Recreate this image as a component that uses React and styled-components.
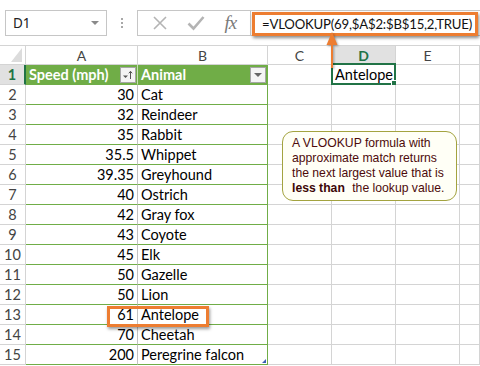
import React from "react";
import styled, { createGlobalStyle } from "styled-components";

const Global = createGlobalStyle`
  html, body { margin: 0; padding: 0; background: #fff; }
  body { width: 480px; height: 366px; overflow: hidden; }
`;

const CELL_FONT = `Lato, "Noto Sans", sans-serif`;
const UI_FONT = `"Noto Sans", "Open Sans", sans-serif`;
const GRID = "#d4d4d4";
const TGREEN = "#70ad47";
const XGREEN = "#217346";
const ORANGE = "#ed7d31";

const Page = styled.div`
  position: relative;
  width: 480px;
  height: 366px;
  overflow: hidden;
  background: #fff;
  font-family: ${CELL_FONT};
`;

const Toolbar = styled.div`
  display: flex;
  align-items: flex-start;
  height: 45px;
  padding: 10px 0 0 5px;
  box-sizing: border-box;
`;

const NameBox = styled.div`
  width: 102px;
  height: 26px;
  box-sizing: border-box;
  border: 1px solid #c6c6c6;
  display: flex;
  align-items: center;
  justify-content: space-between;
  padding: 0 7px 0 7px;
  font-family: ${UI_FONT};
  font-size: 13.5px;
  color: #222;
`;

const DropTri = styled.span`
  width: 0;
  height: 0;
  border-left: 4px solid transparent;
  border-right: 4px solid transparent;
  border-top: 4px solid ${(p) => p.$color || "#8a8a8a"};
`;

const Dots = styled.div`
  width: 30px;
  height: 26px;
  display: flex;
  flex-direction: column;
  align-items: center;
  justify-content: center;
  gap: 2px;
`;

const Dot = styled.span`
  width: 2px;
  height: 2px;
  background: #a8a8a8;
`;

const FormulaFrame = styled.div`
  flex: 1;
  height: 26px;
  box-sizing: border-box;
  border: 1px solid #c6c6c6;
  border-right: none;
  display: flex;
`;

const IconArea = styled.div`
  width: 112px;
  display: flex;
  align-items: center;
  justify-content: space-around;
  padding: 0 4px 0 4px;
  box-sizing: border-box;
`;

const Fx = styled.span`
  font-family: "Liberation Serif", "DejaVu Serif", serif;
  font-style: italic;
  font-size: 19px;
  color: #7a7a7a;
  letter-spacing: -1px;
`;

const FormulaArea = styled.div`
  flex: 1;
  border-left: 1px solid #c6c6c6;
  padding: 1px 0 0 1px;
`;

const Highlight = styled.div`
  width: 226px;
  height: 24px;
  box-sizing: border-box;
  border: 3px solid ${ORANGE};
  box-shadow: 1px 2px 3px rgba(0, 0, 0, 0.45);
  background: #fff;
  display: flex;
  align-items: center;
  padding-left: 7px;
  font-family: ${CELL_FONT};
  font-size: 13.2px;
  letter-spacing: -0.2px;
  color: #111;
  white-space: nowrap;
  overflow: hidden;
`;

const Sheet = styled.div`
  position: relative;
  display: grid;
  grid-template-columns: 26px 112px 130px 64px 64px 64px 20px;
  grid-auto-rows: 20px;
  grid-template-rows: 19px;
  border-top: 1px solid ${GRID};
`;

const Corner = styled.div`
  box-sizing: border-box;
  border-right: 1px solid ${GRID};
  border-bottom: 1px solid ${GRID};
  position: relative;
`;

const CornerTri = styled.span`
  position: absolute;
  right: 3px;
  bottom: 2px;
  width: 0;
  height: 0;
  border-left: 11px solid transparent;
  border-bottom: 14px solid #dcdcdc;
`;

const ColHead = styled.div`
  box-sizing: border-box;
  border-right: 1px solid ${GRID};
  border-bottom: 1px solid ${(p) => (p.$active ? XGREEN : GRID)};
  background: ${(p) => (p.$active ? "#e1e1e1" : "#fff")};
  color: ${(p) => (p.$active ? XGREEN : "#444")};
  font-weight: ${(p) => (p.$active ? 700 : 400)};
  font-size: 14px;
  display: flex;
  align-items: center;
  justify-content: center;
  padding-top: 1px;
`;

const RowHead = styled.div`
  box-sizing: border-box;
  border-right: ${(p) => (p.$active ? `2px solid ${XGREEN}` : `1px solid ${GRID}`)};
  border-bottom: 1px solid ${GRID};
  background: ${(p) => (p.$active ? "#e1e1e1" : "#fff")};
  color: ${(p) => (p.$active ? XGREEN : "#444")};
  font-weight: ${(p) => (p.$active ? 700 : 400)};
  font-size: 14.5px;
  display: flex;
  align-items: center;
  justify-content: center;
`;

const Cell = styled.div`
  position: relative;
  box-sizing: border-box;
  border-right: 1px solid ${(p) => p.$rightColor || GRID};
  border-bottom: 1px solid ${(p) => p.$bottomColor || GRID};
  background: ${(p) => (p.$header ? TGREEN : "#fff")};
  color: ${(p) => (p.$header ? "#fff" : "#000")};
  font-weight: ${(p) => (p.$header ? 700 : 400)};
  font-size: 14.5px;
  display: flex;
  align-items: center;
  justify-content: ${(p) => (p.$align === "right" ? "flex-end" : p.$header ? "space-between" : "flex-start")};
  padding: 0 3px 0 3px;
  white-space: nowrap;
  overflow: visible;
`;

const FilterBtn = styled.span`
  width: 16px;
  height: 16px;
  box-sizing: border-box;
  margin-right: -2px;
  border: 1px solid #a6a6a6;
  background: #f4f4f4;
  display: flex;
  align-items: center;
  justify-content: center;
  gap: 1px;
`;

const SelectBox = styled.span`
  position: absolute;
  left: -1px;
  top: -2px;
  width: 65px;
  height: 22px;
  box-sizing: border-box;
  border: 2px solid ${XGREEN};
  pointer-events: none;
`;

const FillHandle = styled.span`
  position: absolute;
  right: -4px;
  bottom: -4px;
  width: 5px;
  height: 5px;
  background: ${XGREEN};
  border: 1px solid #fff;
`;

const ResizeMark = styled.span`
  position: absolute;
  right: 1px;
  bottom: 1px;
  width: 0;
  height: 0;
  border-left: 4px solid transparent;
  border-bottom: 4px solid #3c5fb5;
`;

const RowMark = styled.span`
  position: absolute;
  left: 107px;
  top: 260px;
  width: 102px;
  height: 21px;
  box-sizing: border-box;
  border: 3px solid ${ORANGE};
  box-shadow: 1px 2px 3px rgba(0, 0, 0, 0.4);
  pointer-events: none;
`;

const Callout = styled.div`
  position: absolute;
  left: 282px;
  top: 85px;
  width: 175px;
  height: 70px;
  box-sizing: border-box;
  border: 1.5px solid #a3a33f;
  border-radius: 11px;
  background: #fffff6;
  padding: 4px 6px 0 9px;
  font-family: "Liberation Sans", Arial, sans-serif;
  font-size: 12.2px;
  line-height: 15px;
  color: #4d0b0b;
  white-space: nowrap;
`;

const Strong = styled.b`
  font-weight: 700;
  color: #3d0707;
  margin-right: 4px;
`;

const ArrowSvg = styled.svg`
  position: absolute;
  left: 325px;
  top: 31px;
  overflow: visible;
  filter: drop-shadow(1px 1px 1px rgba(0, 0, 0, 0.35));
`;

const data = [
  [30, "Cat"],
  [32, "Reindeer"],
  [35, "Rabbit"],
  [35.5, "Whippet"],
  [39.35, "Greyhound"],
  [40, "Ostrich"],
  [42, "Gray fox"],
  [43, "Coyote"],
  [45, "Elk"],
  [50, "Gazelle"],
  [50, "Lion"],
  [61, "Antelope"],
  [70, "Cheetah"],
  [200, "Peregrine falcon"],
];

const cols = ["A", "B", "C", "D", "E", ""];

export default function App() {
  return (
    <Page>
      <Global />
      <Toolbar>
        <NameBox>
          <span>D1</span>
          <DropTri />
        </NameBox>
        <Dots>
          <Dot />
          <Dot />
          <Dot />
        </Dots>
        <FormulaFrame>
          <IconArea>
            <svg width="16" height="16" viewBox="0 0 16 16">
              <path d="M2 2 L14 14 M14 2 L2 14" stroke="#b4b4b4" strokeWidth="1.6" fill="none" />
            </svg>
            <svg width="18" height="16" viewBox="0 0 18 16">
              <path d="M1.5 8.5 L6.5 13.5 L16.5 2" stroke="#b4b4b4" strokeWidth="2.6" fill="none" />
            </svg>
            <Fx>fx</Fx>
          </IconArea>
          <FormulaArea>
            <Highlight>=VLOOKUP(69,$A$2:$B$15,2,TRUE)</Highlight>
          </FormulaArea>
        </FormulaFrame>
      </Toolbar>

      <Sheet>
        <Corner>
          <CornerTri />
        </Corner>
        {cols.map((c, i) => (
          <ColHead key={i} $active={c === "D"}>
            {c}
          </ColHead>
        ))}

        <RowHead $active>1</RowHead>
        <Cell $header $rightColor="#c5dfb3" $bottomColor={TGREEN}>
          <span>Speed (mph)</span>
          <FilterBtn>
            <svg width="12" height="10" viewBox="0 0 12 10">
              <path d="M1 5.5 L6 5.5 L3.5 8 Z" fill="#555" />
              <path d="M8.5 9 L8.5 1.5 M6.8 3.3 L8.5 1.3 L10.2 3.3" stroke="#555" strokeWidth="1" fill="none" />
            </svg>
          </FilterBtn>
        </Cell>
        <Cell $header $rightColor={TGREEN} $bottomColor={TGREEN}>
          <span>Animal</span>
          <FilterBtn>
            <DropTri $color="#666" />
          </FilterBtn>
        </Cell>
        <Cell />
        <Cell $align="left">
          Antelope
          <SelectBox>
            <FillHandle />
          </SelectBox>
        </Cell>
        <Cell />
        <Cell />

        {data.map(([n, a], i) => (
          <React.Fragment key={i}>
            <RowHead>{i + 2}</RowHead>
            <Cell $align="right" $rightColor="#c3c3c3" $bottomColor={TGREEN}>
              {n}
            </Cell>
            <Cell $rightColor={TGREEN} $bottomColor={TGREEN}>
              {a}
              {i === data.length - 1 && <ResizeMark />}
            </Cell>
            <Cell />
            <Cell />
            <Cell />
            <Cell />
          </React.Fragment>
        ))}

        <RowMark />
        <Callout>
          A VLOOKUP formula with
          <br />
          approximate match returns
          <br />
          the next largest value that is
          <br />
          <Strong>less than</Strong> the lookup value.
        </Callout>
      </Sheet>

      <ArrowSvg width="14" height="40" viewBox="0 0 14 40">
        <path d="M7 1 L12.5 14 L1.5 14 Z" fill={ORANGE} />
        <rect x="6" y="13" width="2" height="24" fill={ORANGE} />
      </ArrowSvg>
    </Page>
  );
}
